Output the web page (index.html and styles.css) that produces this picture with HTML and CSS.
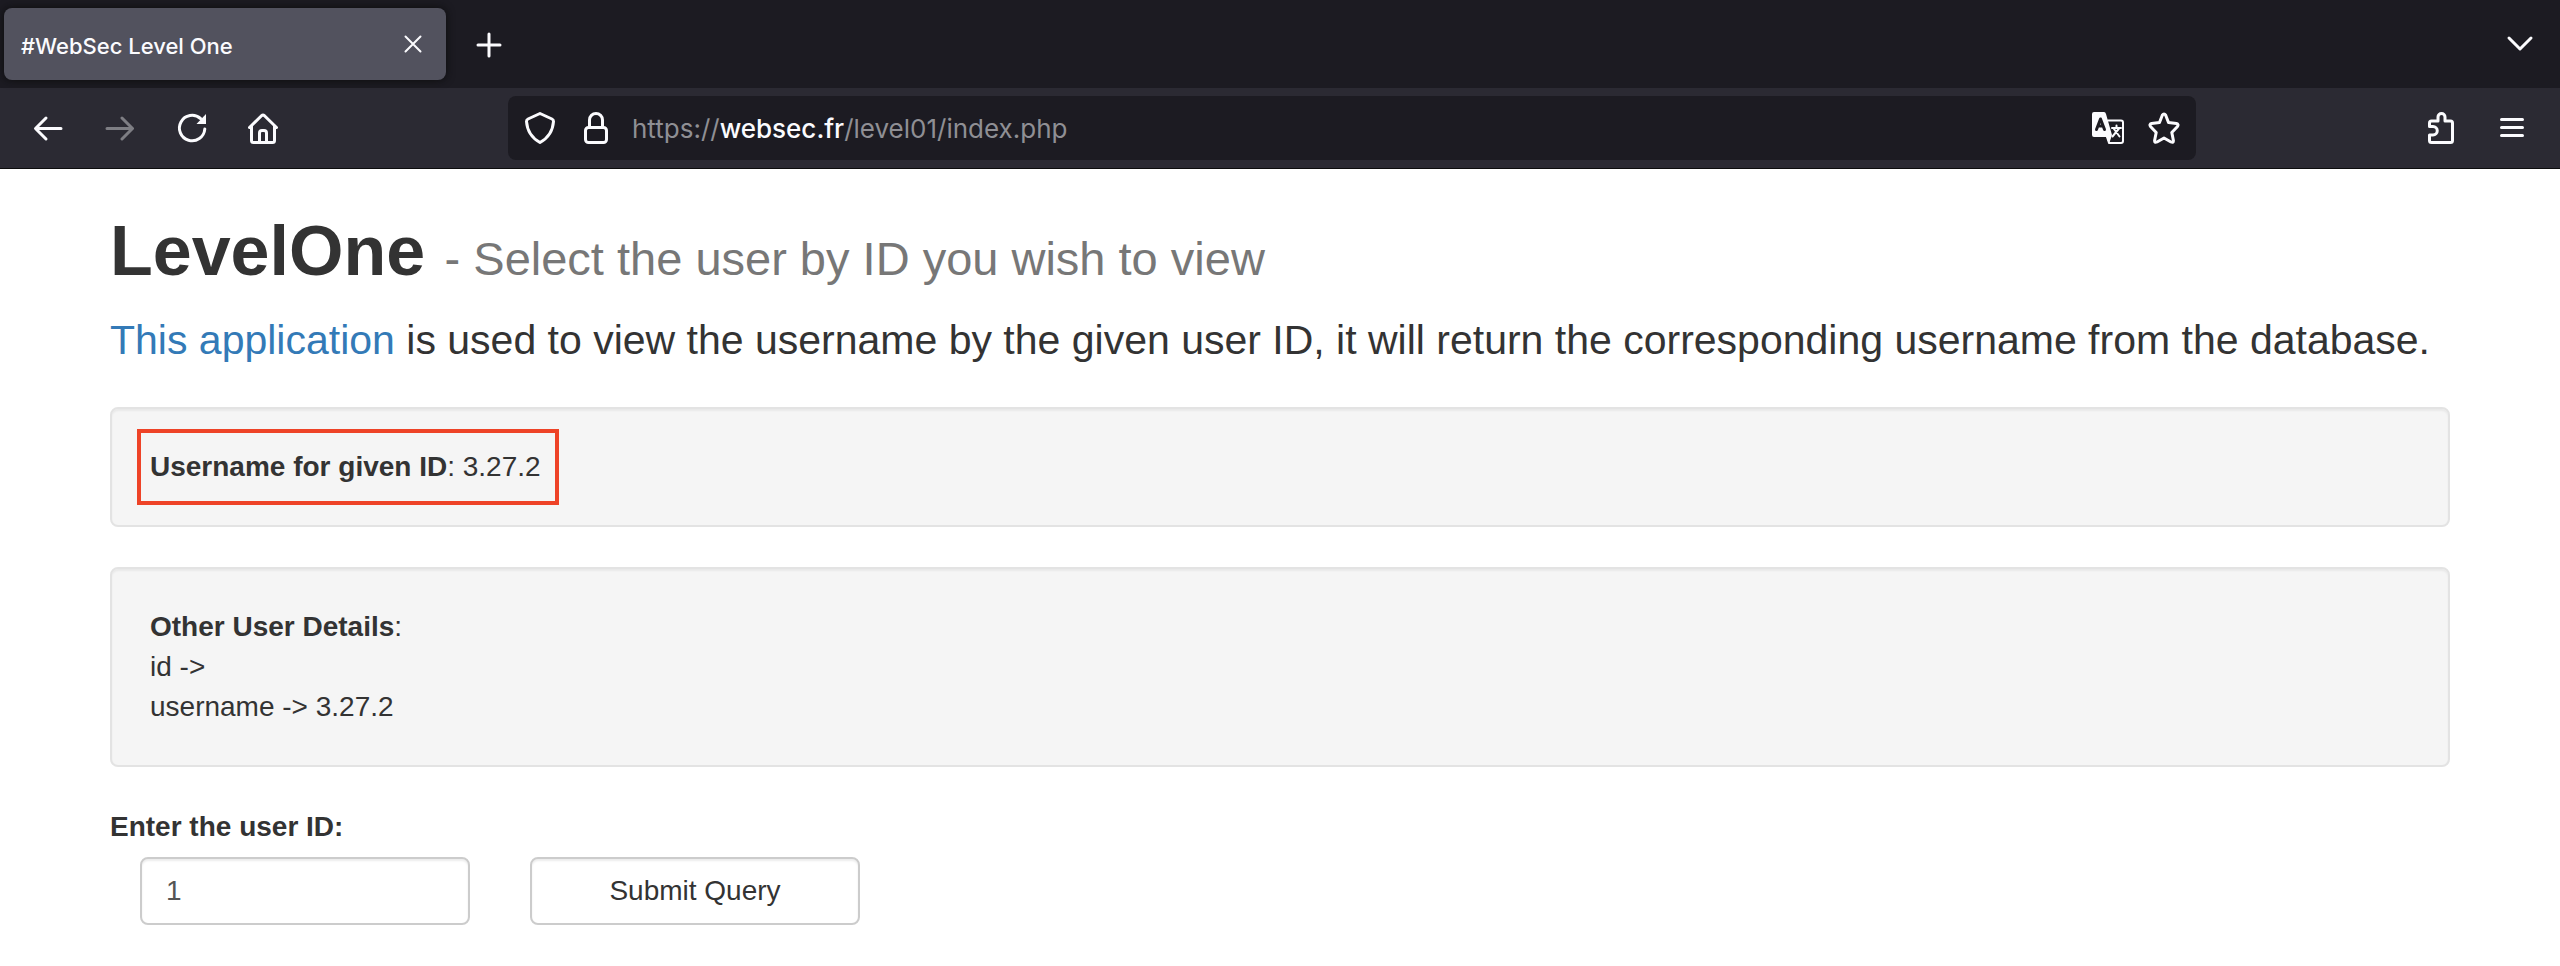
FILE: index.html
```html
<!DOCTYPE html>
<html lang="en">
<head>
<meta charset="utf-8">
<title>#WebSec Level One</title>
<link rel="stylesheet" href="styles.css">
</head>
<body>
<header class="browser">
  <div class="tabstrip">
    <div class="tab">
      <span class="tab-title">#WebSec Level One</span>
      <button class="icon-btn" aria-label="Close tab"><svg class="ico" viewBox="0 0 32 32"><path d="M8.500 8.500l15 15M23.500 8.500l-15 15"/></svg></button>
    </div>
    <button class="icon-btn" aria-label="New tab"><svg class="ico" viewBox="0 0 32 32"><path class="thick" d="M16 6v22M5 17h22"/></svg></button>
    <button class="icon-btn tabs-menu" aria-label="List all tabs"><svg class="ico" viewBox="0 0 32 32"><path class="thick" d="M5 10l11 11 11-11"/></svg></button>
  </div>
  <nav class="navbar">
    <div class="nav-group">
      <button class="icon-btn" aria-label="Back"><svg class="ico" viewBox="0 0 32 32"><path class="thick" d="M29 16.500H4M14 6L3.500 16.500 14 27"/></svg></button>
      <button class="icon-btn dim" aria-label="Forward"><svg class="ico" viewBox="0 0 32 32"><path class="thick" d="M3 16.500h25M18 6l10.500 10.500L18 27"/></svg></button>
      <button class="icon-btn" aria-label="Reload"><svg class="ico" viewBox="0 0 32 32"><path class="thick" d="M28.800 17A12.700 12.700 0 1 1 24.500 6.500"/><path class="solid" d="M30 2v10H20.500z"/></svg></button>
      <button class="icon-btn" aria-label="Home"><svg class="ico" viewBox="0 0 32 32"><path class="thick" d="M1.500 15.500L13.500 3.700q1.500-1.200 3 0l12 11.800M3.500 14v14.500q0 2 2 2h19q2 0 2-2V14M11.500 30V21q0-2.500 2.500-2.500h2q2.500 0 2.500 2.500v9"/></svg></button>
    </div>
    <div class="urlbar">
      <div class="url-icons">
        <button class="icon-btn" aria-label="Tracking protection"><svg class="ico" viewBox="0 0 32 32"><path class="thick" d="M16 1.500L28 7q1.500.7 1.500 2.500Q28.500 23.500 16 30.500 3.500 23.500 2.500 9.500 2.500 7.700 4 7z"/></svg></button>
        <button class="icon-btn" aria-label="Site security"><svg class="ico" viewBox="0 0 32 32"><rect class="thick" x="5.500" y="15.500" width="21" height="15" rx="3"/><path class="thick" d="M9.500 15V8a6.500 6.500 0 0 1 13 0v7"/></svg></button>
      </div>
      <span class="url">https://<b class="domain">websec.fr</b>/level01/index.php</span>
      <div class="url-icons">
        <button class="icon-btn" aria-label="Translate page"><svg class="ico" viewBox="0 0 32 32"><path d="M16 8.500h13q2 0 2 2V29q0 2-2 2H17l-2-6"/><path class="solid" d="M2 0h10q1.500 0 2 2l6 21-3 9-2.500-7H2q-2 0-2-2V2q0-2 2-2z"/><path class="cut" d="M4.500 17.500L8.500 7l4 10.500M6 14h5"/><path d="M20 16h9M24.500 13.500V16M20.500 24.500l6.500-8M22 17l5.500 7.500"/></svg></button>
        <button class="icon-btn" aria-label="Bookmark page"><svg class="ico" viewBox="0 0 32 32"><path class="thick" d="M14.300 3.200q1.700-2.500 3.400 0L20.500 10.500l8 1q2.500.7 1 3L23.800 20.500l1.600 8q.1 2.600-2.400 1.500L16 26l-7 4q-2.500 1.100-2.400-1.500l1.600-8L2.500 14.500q-1.500-2.300 1-3l8-1z"/></svg></button>
      </div>
    </div>
    <div class="nav-group nav-end">
      <button class="icon-btn" aria-label="Extensions"><svg class="ico" viewBox="0 0 32 32"><path class="thick" d="M5.500 14.500V11q0-2 2-2h6.500V5a3.500 3.500 0 0 1 7 0v4h5.500q2 0 2 2v17.500q0 2-2 2h-19q-2 0-2-2V23H9a4.200 4.200 0 0 0 0-8.500z"/></svg></button>
      <button class="icon-btn" aria-label="Menu"><svg class="ico" viewBox="0 0 32 32"><path class="thick" d="M5.500 7.500h21M5.500 15.500h21M5.500 23.500h21"/></svg></button>
    </div>
  </nav>
</header>
<main class="page">
  <h1 class="title">LevelOne <small class="subtitle">- Select the user by ID you wish to view</small></h1>
  <p class="lead"><a class="link" href="#">This application</a> is used to view the username by the given user ID, it will return the corresponding username from the database.</p>
  <section class="well well-result">
    <p class="result"><b>Username for given ID</b>: 3.27.2</p>
  </section>
  <section class="well well-details">
    <b>Other User Details</b>:<br>id -&gt;<br>username -&gt; 3.27.2
  </section>
  <form class="form">
    <label class="label" for="user-id">Enter the user ID:</label>
    <div class="fields">
      <input class="control" id="user-id" type="text" value="1">
      <button class="control submit" type="button">Submit Query</button>
    </div>
  </form>
</main>
</body>
</html>
```
FILE: styles.css
```css
* { box-sizing: border-box; }

body {
  margin: 0;
  background: #fff;
  color: #333;
  font: 28px/40px "Liberation Sans", Arial, sans-serif;
}

/* Browser chrome */
.browser {
  color: #fbfbfe;
  background: #2b2a33;
  border-bottom: 1px solid #0c0c0d;
  font-family: Inter, sans-serif;
}

.tabstrip {
  display: flex;
  align-items: center;
  gap: 27px;
  height: 88px;
  padding: 0 24px 0 4px;
  background: #1c1b22;
}

.tab {
  display: flex;
  align-items: center;
  justify-content: space-between;
  width: 442px;
  height: 72px;
  padding: 0 17px;
  border-radius: 8px;
  background: #52525e;
  box-shadow: 0 0 8px #0c0c0d;
}

.tab-title { padding-top: 3px; font-size: 22px; font-weight: 500; }

.icon-btn {
  display: flex;
  padding: 0;
  border: 0;
  background: none;
  color: inherit;
}

.dim { opacity: .4; }
.tabs-menu { margin-left: auto; }

.ico {
  width: 32px;
  height: 32px;
  fill: none;
  stroke: currentColor;
  stroke-width: 2;
  stroke-linecap: round;
  stroke-linejoin: round;
}

.thick { stroke-width: 3; }
.solid { fill: currentColor; stroke: none; }
.cut { stroke: #1c1b22; stroke-width: 3; }

.navbar {
  display: grid;
  grid-template-columns: 476fr 1688fr 332fr;
  align-items: center;
  height: 80px;
  padding: 0 32px;
}

.nav-group { display: flex; gap: 40px; }
.nav-end { justify-content: flex-end; }

.urlbar {
  display: flex;
  align-items: center;
  gap: 20px;
  height: 64px;
  padding: 0 16px;
  border-radius: 8px;
  background: #1c1b22;
}

.url-icons { display: flex; gap: 24px; }

.url {
  flex: 1;
  padding-top: 2px;
  color: #8f8f94;
  font-size: 26px;
}

.domain { color: #fbfbfe; font-weight: 500; }

/* Page content */
.page {
  max-width: 2340px;
  margin: 0 auto;
  padding-top: 42px;
}

.title {
  margin: 0 0 20px;
  font-size: 70px;
  line-height: 80px;
}

.subtitle {
  color: #777;
  font-size: 47px;
  font-weight: 400;
  line-height: 1;
}

.lead {
  margin: 0 0 38px;
  font-size: 41px;
  line-height: 58px;
}

.link { color: #337ab7; text-decoration: none; }

.well {
  margin-bottom: 40px;
  border: 2px solid #e3e3e3;
  border-radius: 8px;
  background: #f5f5f5;
  box-shadow: inset 0 2px 2px rgba(0, 0, 0, .05);
}

.well-result { padding: 20px 25px; }
.well-details { padding: 38px; }

.result {
  width: fit-content;
  margin: 0;
  padding: 14px 14px 14px 9px;
  border: 4px solid #ee4327;
}

.label { display: block; margin-bottom: 10px; font-weight: 700; }

.fields { display: flex; gap: 60px; padding-left: 30px; }

.control {
  width: 330px;
  height: 68px;
  padding: 12px 24px;
  border: 2px solid #ccc;
  border-radius: 8px;
  background: #fff;
  box-shadow: inset 0 2px 2px rgba(0, 0, 0, .075);
  color: #555;
  font: inherit;
}

.submit { color: #333; }
```
